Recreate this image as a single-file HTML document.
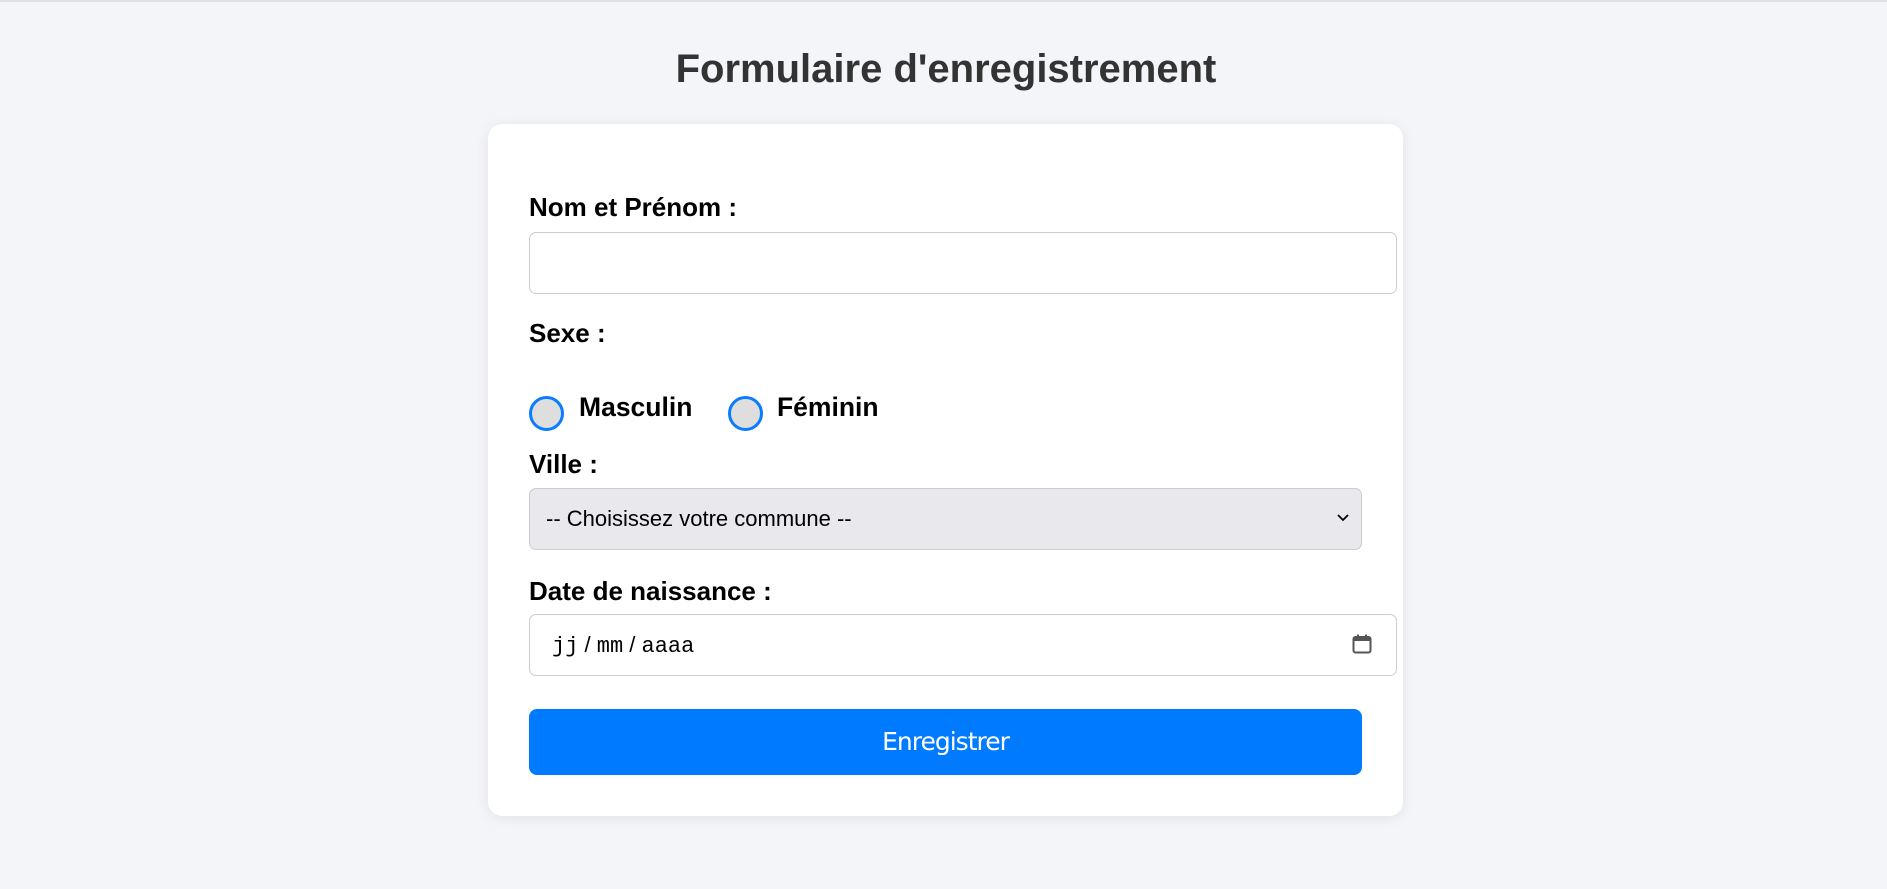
<!DOCTYPE html>
<html><head><meta charset="utf-8"><style>
html,body{margin:0;padding:0}
body{width:1887px;height:889px;background:#f4f5f9;font-family:"Liberation Sans",Arial,sans-serif;position:relative;overflow:hidden;border-top:2px solid #e2e2e4;box-sizing:border-box}
.a{position:absolute}
h1{position:absolute;left:0;width:1892px;text-align:center;top:43px;margin:0;font-size:40px;font-weight:bold;color:#333;line-height:48px}
.card{left:488px;top:122px;width:915px;height:692px;background:#fff;border-radius:14px;box-shadow:0 2px 14px rgba(0,0,0,0.08)}
.lbl{font-weight:bold;font-size:26px;color:#000;line-height:30px}
.box{border:1.5px solid #ccc;border-radius:7px;box-sizing:border-box;background:#fff}
.radio{width:35px;height:35px;border:3px solid #0a7cff;border-radius:50%;background:#dedede;box-sizing:border-box}
</style></head><body>
<h1>Formulaire d'enregistrement</h1>
<div class="a card"></div>
<div class="a lbl" style="left:529px;top:190px">Nom et Prénom :</div>
<div class="a box" style="left:529px;top:230px;width:868px;height:62px"></div>
<div class="a lbl" style="left:529px;top:316px">Sexe :</div>
<div class="a radio" style="left:529px;top:394px"></div>
<div class="a lbl" style="left:579px;top:390px;font-size:26.5px">Masculin</div>
<div class="a radio" style="left:728px;top:394px"></div>
<div class="a lbl" style="left:777px;top:390px;font-size:26.5px">Féminin</div>
<div class="a lbl" style="left:529px;top:447px">Ville :</div>
<div class="a box" style="left:529px;top:486px;width:833px;height:62px;background:#e8e8ed"></div>
<div class="a" style="left:546px;top:504px;font-size:22px;line-height:26px;color:#000">-- Choisissez votre commune --</div>
<svg class="a" style="left:1336px;top:510px" width="14" height="12" viewBox="0 0 14 12"><path d="M2 3l5 5 5-5" fill="none" stroke="#000" stroke-width="1.8"/></svg>
<div class="a lbl" style="left:529px;top:574px">Date de naissance :</div>
<div class="a box" style="left:529px;top:612px;width:868px;height:62px"></div>
<div class="a" style="left:552px;top:630px;font-size:22px;line-height:26px;color:#000;font-family:'Liberation Mono',monospace">jj<span style="font-family:'Liberation Sans'"> / </span>mm<span style="font-family:'Liberation Sans'"> / </span>aaaa</div>
<svg class="a" style="left:1350px;top:630px" width="24" height="24" viewBox="0 0 24 24"><rect x="3.5" y="5" width="17" height="15.5" rx="2" fill="none" stroke="#555" stroke-width="2"/><rect x="3.5" y="5" width="17" height="4" fill="#555"/><rect x="7" y="2.5" width="2" height="4" fill="#555"/><rect x="15" y="2.5" width="2" height="4" fill="#555"/></svg>
<div class="a" style="left:529px;top:707px;width:833px;height:66px;background:#007bff;border-radius:8px;color:#fff;font-size:25px;line-height:66px;text-align:center;font-family:'DejaVu Sans',sans-serif;letter-spacing:-1px">Enregistrer</div>
</body></html>
